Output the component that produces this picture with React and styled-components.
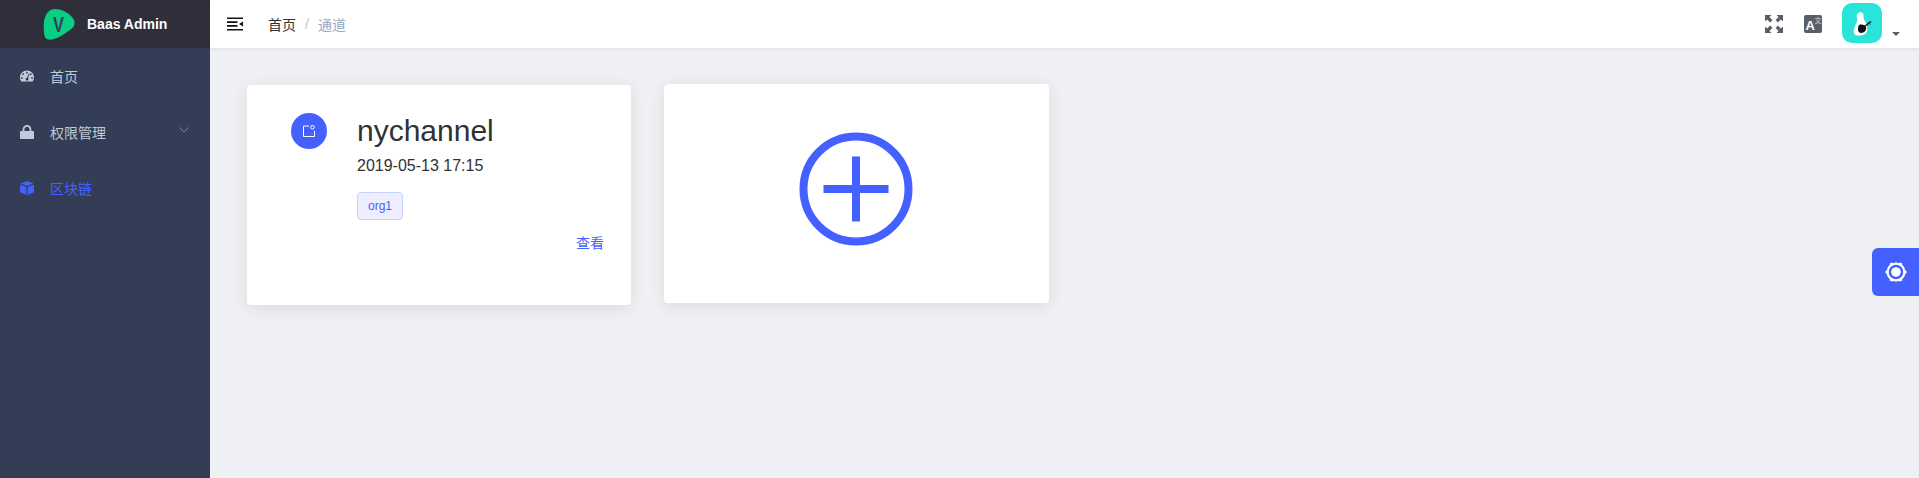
import React from 'react';
import styled, { createGlobalStyle } from 'styled-components';

const Global = createGlobalStyle`
  html, body { margin: 0; padding: 0; height: 100%; }
  body {
    background: #eff0f4;
    font-family: "Liberation Sans", "Noto Sans CJK SC", sans-serif;
    overflow: hidden;
  }
`;

const primary = '#4461ff';

const Layout = styled.div`
  display: flex;
  height: 478px;
`;

const Sidebar = styled.aside`
  width: 210px;
  flex-shrink: 0;
  background: #333d56;
`;

const Brand = styled.div`
  height: 48px;
  display: flex;
  align-items: center;
  padding-left: 43px;
  gap: 12px;
  background: #2f2f3c;
  color: #fff;
  font-size: 14px;
  font-weight: 700;
`;

const MenuItem = styled.div`
  height: 56px;
  display: flex;
  align-items: center;
  padding-left: 20px;
  font-size: 14px;
  color: ${p => (p.$active ? primary : '#bfcbd9')};
`;

const MenuIcon = styled.svg`
  width: 14px;
  height: 14px;
  margin-right: 16px;
  display: block;
  fill: currentColor;
`;

const Chevron = styled.svg`
  margin-left: auto;
  margin-right: 21px;
  margin-top: -4px;
`;

const Main = styled.div`
  flex: 1;
  min-width: 0;
  position: relative;
`;

const Header = styled.header`
  height: 48px;
  display: flex;
  align-items: center;
  background: #fff;
  box-shadow: 0 1px 4px rgba(0, 21, 41, 0.08);
  padding-left: 17px;
`;

const Crumbs = styled.nav`
  display: flex;
  align-items: center;
  margin-left: 25px;
  font-size: 14px;
  color: #303133;
`;

const Sep = styled.span`
  margin: 0 9px;
  color: #c0c4cc;
`;

const CrumbLast = styled.span`
  color: #97a8be;
`;

const Tools = styled.div`
  margin-left: auto;
  display: flex;
  align-items: center;
`;

const ToolIcon = styled.svg`
  margin-right: ${p => p.$gap}px;
  display: block;
`;

const Avatar = styled.div`
  width: 40px;
  height: 40px;
  margin-top: -2px;
  border-radius: 10px;
  background: #29e4d8;
  overflow: hidden;
`;

const Caret = styled.span`
  width: 0;
  height: 0;
  margin: 20px 19px 0 10px;
  border-left: 4px solid transparent;
  border-right: 4px solid transparent;
  border-top: 4px solid #5a5e66;
`;

const Cards = styled.section`
  display: flex;
  align-items: flex-start;
  gap: 33px;
  padding: 36px 0 0 37px;
`;

const Card = styled.div`
  box-sizing: border-box;
  width: ${p => p.$w}px;
  height: ${p => p.$h}px;
  margin-top: ${p => p.$top || 0}px;
  background: #fff;
  border-radius: 4px;
  box-shadow: 0 3px 16px rgba(0, 0, 0, 0.09);
`;

const ChannelBody = styled.div`
  display: flex;
  gap: 30px;
  padding: 28px 27px 0 44px;
`;

const Badge = styled.div`
  width: 36px;
  height: 36px;
  flex-shrink: 0;
  border-radius: 50%;
  background: ${primary};
  display: flex;
  align-items: center;
  justify-content: center;
`;

const Info = styled.div`
  flex: 1;
`;

const Title = styled.div`
  font-size: 30px;
  line-height: 36px;
  color: #303133;
`;

const DateText = styled.div`
  margin-top: 7px;
  font-size: 16px;
  line-height: 20px;
  color: #303133;
`;

const Tag = styled.span`
  box-sizing: border-box;
  display: inline-block;
  height: 28px;
  margin-top: 16px;
  padding: 0 10px;
  line-height: 26px;
  font-size: 12px;
  color: ${primary};
  background: #edefff;
  border: 1px solid #c8d0ff;
  border-radius: 4px;
`;

const Actions = styled.div`
  margin-top: 13px;
  text-align: right;
  font-size: 14px;
  line-height: 20px;
  color: ${primary};
`;

const AddCard = styled(Card)`
  display: flex;
  align-items: center;
  justify-content: center;
  padding: 0 1px 9px 0;
`;

const SettingsTab = styled.div`
  position: absolute;
  right: 0;
  top: 248px;
  width: 47px;
  height: 48px;
  border-radius: 6px 0 0 6px;
  background: ${primary};
  display: flex;
  align-items: center;
  justify-content: center;
`;

const Logo = () => (
  <svg width="32" height="32" viewBox="0 2 32 32">
    <path d="M12 3C18 3 24 6 28 10C33 15 33 20 27 24C21 28 16 32 9 33.5C4 34.5 1 32 1 26C0.5 19 0.5 14 3 9C5 5 8 3 12 3Z" fill="#0bce82" />
    <text x="15.5" y="26" textAnchor="middle" fontSize="22" textLength="11" lengthAdjust="spacingAndGlyphs" fill="#34405a" fontFamily="Liberation Sans">V</text>
  </svg>
);

const MenuLines = () => (
  <svg width="16" height="14" viewBox="0 0 16 14" style={{ display: 'block' }}>
    <path d="M0 0.5H16V2H0ZM0 4.2H10.5V6H0ZM0 8H10.5V9.8H0ZM0 12H16V13.5H0ZM16 4.5V9.5L12 7Z" fill="#111" />
  </svg>
);

const Expand = () => (
  <ToolIcon $gap={21} width="18" height="18" viewBox="0 0 18 18" fill="#5a5e66">
    <path d="M0 0H6.5L4.4 2.1 7.4 5.1 5.1 7.4 2.1 4.4 0 6.5Z" />
    <path d="M18 0H11.5L13.6 2.1 10.6 5.1 12.9 7.4 15.9 4.4 18 6.5Z" />
    <path d="M0 18H6.5L4.4 15.9 7.4 12.9 5.1 10.6 2.1 13.6 0 11.5Z" />
    <path d="M18 18H11.5L13.6 15.9 10.6 12.9 12.9 10.6 15.9 13.6 18 11.5Z" />
  </ToolIcon>
);

const Translate = () => (
  <ToolIcon $gap={20} width="18" height="18" viewBox="0 0 18 18">
    <rect width="18" height="18" rx="2" fill="#5a5e66" />
    <text x="1.5" y="15" fontSize="13" fontWeight="700" fontFamily="Liberation Sans" fill="#fff">A</text>
    <text x="10.5" y="8" fontSize="7" fontFamily="Noto Sans CJK SC" fill="#d5d6da">文</text>
  </ToolIcon>
);

const Rabbit = () => (
  <svg width="40" height="40" viewBox="0 0 40 40" style={{ display: 'block' }}>
    <path d="M17 9.5C20 8.5 22 10.5 21.5 13C21 15 22.5 17 24 20C26 24 26 29 23 31C20 33 14 33 12.5 31C11 29 12 25 13.5 22C15 19 15.5 18 15 15.5L14.5 13C14.5 11.5 16 10 17 9.5Z" fill="#fff" />
    <path d="M17 22C20 21 23 22 24 24C25 27 22 30 19 30C16 30 15 26 17 22Z" fill="#111" />
    <path d="M22 24L29 18.5" stroke="#111" strokeWidth="1.4" />
    <path d="M26 19.5L28 21.5" stroke="#111" strokeWidth="1" />
  </svg>
);

const Gear = () => (
  <svg width="24" height="24" viewBox="0 0 24 24" fill="none" stroke="#fff">
    <circle cx="12" cy="12" r="8.4" strokeWidth="2.2" />
    <path d="M1.5 12H4.5M19.5 12H22.5M6.8 3L8.3 5.6M17.2 3L15.7 5.6M6.8 21L8.3 18.4M17.2 21L15.7 18.4" strokeWidth="3" />
    <circle cx="12" cy="12" r="4.8" fill="#fff" stroke="none" />
  </svg>
);

const App = () => (
  <Layout>
    <Global />
    <Sidebar>
      <Brand>
        <Logo />
        <span>Baas Admin</span>
      </Brand>
      <MenuItem>
        <MenuIcon viewBox="0 0 14 14">
          <path fillRule="evenodd" d="M7 1.5C3.1 1.5 0 4.6 0 8.5C0 10 .4 11.3 1.2 12.5H12.8C13.6 11.3 14 10 14 8.5C14 4.6 10.9 1.5 7 1.5ZM7 2.8A.9.9 0 1 1 7 4.6A.9.9 0 0 1 7 2.8ZM3.2 4.3A.9.9 0 1 1 3.2 6.1A.9.9 0 0 1 3.2 4.3ZM10.8 4.3A.9.9 0 1 1 10.8 6.1A.9.9 0 0 1 10.8 4.3ZM2 8A.9.9 0 1 1 2 9.8A.9.9 0 0 1 2 8ZM12 8A.9.9 0 1 1 12 9.8A.9.9 0 0 1 12 8ZM8.7 4.8L9.6 5.2L8 9.1C8.5 9.5 8.7 10 8.5 10.6C8.3 11.4 7.5 11.8 6.7 11.6C5.9 11.4 5.4 10.6 5.6 9.8C5.8 9.1 6.4 8.7 7.1 8.7Z" />
        </MenuIcon>
        首页
      </MenuItem>
      <MenuItem>
        <MenuIcon viewBox="0 0 14 14">
          <path d="M1 6H2.6V4.6C2.6 2 4.6 0 7 0C9.4 0 11.4 2 11.4 4.6V6H13C13.6 6 14 6.4 14 7V13C14 13.6 13.6 14 13 14H1C.4 14 0 13.6 0 13V7C0 6.4 .4 6 1 6ZM4.4 6H9.6V4.6C9.6 3 8.4 1.8 7 1.8C5.6 1.8 4.4 3 4.4 4.6Z" />
        </MenuIcon>
        权限管理
        <Chevron width="10" height="6" viewBox="0 0 10 6" fill="none">
          <path d="M0.5 0.5L5 5L9.5 0.5" stroke="#7b8497" />
        </Chevron>
      </MenuItem>
      <MenuItem $active>
        <MenuIcon viewBox="0 0 14 14">
          <path d="M7 0L13.4 2.4L7 4.9L.6 2.4Z" />
          <path d="M0 3.4L6.4 5.9V14L.6 11.6C.2 11.4 0 11.1 0 10.7Z" />
          <path d="M14 3.4L7.6 5.9V14L13.4 11.6C13.8 11.4 14 11.1 14 10.7Z" />
        </MenuIcon>
        区块链
      </MenuItem>
    </Sidebar>
    <Main>
      <Header>
        <MenuLines />
        <Crumbs>
          <span>首页</span>
          <Sep>/</Sep>
          <CrumbLast>通道</CrumbLast>
        </Crumbs>
        <Tools>
          <Expand />
          <Translate />
          <Avatar><Rabbit /></Avatar>
          <Caret />
        </Tools>
      </Header>
      <Cards>
        <Card $w={384} $h={220} $top={1}>
          <ChannelBody>
            <Badge>
              <svg width="14" height="14" viewBox="0 0 14 14" fill="none" stroke="#fff" strokeWidth="1">
                <path d="M7 2H1.5V12.5H12.5V7" />
                <circle cx="10.5" cy="3.2" r="1.8" />
              </svg>
            </Badge>
            <Info>
              <Title>nychannel</Title>
              <DateText>2019-05-13 17:15</DateText>
              <Tag>org1</Tag>
              <Actions>查看</Actions>
            </Info>
          </ChannelBody>
        </Card>
        <AddCard $w={385} $h={219}>
          <svg width="114" height="114" viewBox="0 0 114 114" fill="none" stroke={primary} strokeWidth="8">
            <circle cx="57" cy="57" r="52.5" />
            <path d="M57 24.5V89.5M24.5 57H89.5" />
          </svg>
        </AddCard>
      </Cards>
      <SettingsTab><Gear /></SettingsTab>
    </Main>
  </Layout>
);

export default App;
